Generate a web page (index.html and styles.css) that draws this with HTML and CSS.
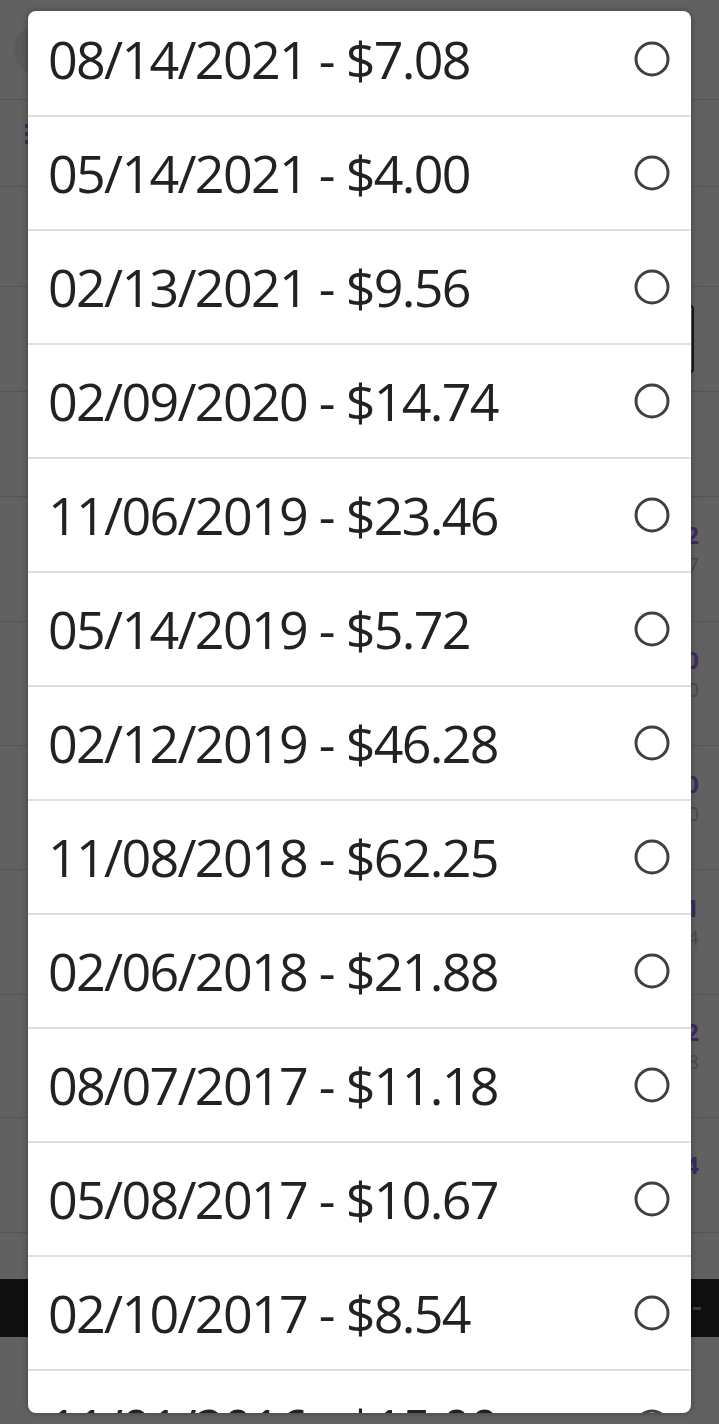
FILE: index.html
```html
<!DOCTYPE html>
<html lang="en">
<head>
<meta charset="utf-8">
<title>Select a date</title>
<link rel="stylesheet" href="styles.css">
</head>
<body>
<div class="page">
  <header class="page-head"><span class="avatar"></span></header>
  <div class="prow h87"><span class="menu-mark"></span></div>
  <div class="prow h100"></div>
  <div class="prow h105"><span class="outline-btn"></span></div>
  <div class="prow h105"></div>
  <div class="prow h125"><span class="amt"><b>2</b><i>7</i></span></div>
  <div class="prow h124"><span class="amt"><b>0</b><i>0</i></span></div>
  <div class="prow h124"><span class="amt"><b>0</b><i>0</i></span></div>
  <div class="prow h125"><span class="amt"><b>1</b><i>4</i></span></div>
  <div class="prow h123"><span class="amt"><b>2</b><i>8</i></span></div>
  <div class="prow h115"><span class="amt"><b>4</b></span></div>
  <div class="spacer"></div>
  <div class="bottom-bar"><span class="dash"></span></div>
</div>

<div class="dialog">
  <ul class="options">
    <li class="option"><span class="label">08/14/2021 - $7.08</span><svg class="radio" viewBox="0 0 36 36"><circle cx="18" cy="18" r="16"/></svg></li>
    <li class="option"><span class="label">05/14/2021 - $4.00</span><svg class="radio" viewBox="0 0 36 36"><circle cx="18" cy="18" r="16"/></svg></li>
    <li class="option"><span class="label">02/13/2021 - $9.56</span><svg class="radio" viewBox="0 0 36 36"><circle cx="18" cy="18" r="16"/></svg></li>
    <li class="option"><span class="label">02/09/2020 - $14.74</span><svg class="radio" viewBox="0 0 36 36"><circle cx="18" cy="18" r="16"/></svg></li>
    <li class="option"><span class="label">11/06/2019 - $23.46</span><svg class="radio" viewBox="0 0 36 36"><circle cx="18" cy="18" r="16"/></svg></li>
    <li class="option"><span class="label">05/14/2019 - $5.72</span><svg class="radio" viewBox="0 0 36 36"><circle cx="18" cy="18" r="16"/></svg></li>
    <li class="option"><span class="label">02/12/2019 - $46.28</span><svg class="radio" viewBox="0 0 36 36"><circle cx="18" cy="18" r="16"/></svg></li>
    <li class="option"><span class="label">11/08/2018 - $62.25</span><svg class="radio" viewBox="0 0 36 36"><circle cx="18" cy="18" r="16"/></svg></li>
    <li class="option"><span class="label">02/06/2018 - $21.88</span><svg class="radio" viewBox="0 0 36 36"><circle cx="18" cy="18" r="16"/></svg></li>
    <li class="option"><span class="label">08/07/2017 - $11.18</span><svg class="radio" viewBox="0 0 36 36"><circle cx="18" cy="18" r="16"/></svg></li>
    <li class="option"><span class="label">05/08/2017 - $10.67</span><svg class="radio" viewBox="0 0 36 36"><circle cx="18" cy="18" r="16"/></svg></li>
    <li class="option"><span class="label">02/10/2017 - $8.54</span><svg class="radio" viewBox="0 0 36 36"><circle cx="18" cy="18" r="16"/></svg></li>
    <li class="option"><span class="label">11/01/2016 - $15.00</span><svg class="radio" viewBox="0 0 36 36"><circle cx="18" cy="18" r="16"/></svg></li>
  </ul>
</div>
</body>
</html>
```
FILE: styles.css
```css
* { box-sizing: border-box; }
html, body {
  margin: 0;
  padding: 0;
  height: 100%;
  overflow: hidden;
}
body {
  background: #616161;
  font-family: "Open Sans", "Noto Sans", sans-serif;
}

/* dimmed page beneath the dialog */
.page {
  display: flex;
  flex-direction: column;
  height: 1424px;
}
.page-head {
  height: 100px;
  border-bottom: 1px solid #545454;
  display: flex;
  align-items: center;
  padding-left: 14px;
}
.avatar {
  width: 52px;
  height: 52px;
  border-radius: 50%;
  background: #5a5a5a;
}
.prow {
  border-bottom: 1px solid #555;
  display: flex;
  align-items: center;
  justify-content: flex-end;
}
.h87 { height: 87px; justify-content: flex-start; padding-left: 25px; align-items: flex-start; padding-top: 24px; }
.h100 { height: 100px; }
.h105 { height: 105px; }
.h125 { height: 125px; }
.h124 { height: 124px; }
.h123 { height: 123px; }
.h115 { height: 115px; }
.menu-mark {
  width: 4px;
  height: 20px;
  background: repeating-linear-gradient(#3f2d5c 0 4px, transparent 4px 8px);
}
.outline-btn {
  width: 60px;
  height: 68px;
  border: 2px solid #1a1a1a;
  border-radius: 4px;
  margin-right: 25px;
}
.amt {
  display: flex;
  flex-direction: column;
  align-items: flex-end;
  gap: 2px;
  margin-right: 20px;
  margin-top: -20px;
}
.amt b {
  font-size: 24px;
  font-weight: 700;
  line-height: 30px;
  color: #3f2a5e;
}
.amt i {
  font-style: normal;
  font-size: 20px;
  line-height: 26px;
  color: #4a4a4a;
}
.spacer { height: 46px; }
.bottom-bar {
  height: 58px;
  background: #0f0f0f;
  display: flex;
  align-items: center;
  justify-content: flex-end;
  padding-right: 18px;
}
.dash {
  width: 8px;
  height: 3px;
  background: #3a3a3a;
}

/* dialog overlay */
.dialog {
  position: absolute;
  top: 11px;
  left: 28px;
  width: 663px;
  height: 1402px;
  background: #fff;
  border-radius: 8px;
  overflow: hidden;
  box-shadow: 0 0 6px rgba(0, 0, 0, 0.35);
}
.options {
  list-style: none;
  margin: -8px 0 0;
  padding: 0;
}
.option {
  height: 114px;
  border-bottom: 2px solid #dedede;
  display: flex;
  align-items: center;
  justify-content: space-between;
  padding: 0 21px 0 20px;
}
.label {
  font-size: 52px;
  letter-spacing: -1.7px;
  color: #222;
  line-height: 1;
  white-space: nowrap;
}
.radio {
  width: 36px;
  height: 36px;
  flex: none;
}
.radio circle {
  fill: none;
  stroke: #404040;
  stroke-width: 3px;
}
```
